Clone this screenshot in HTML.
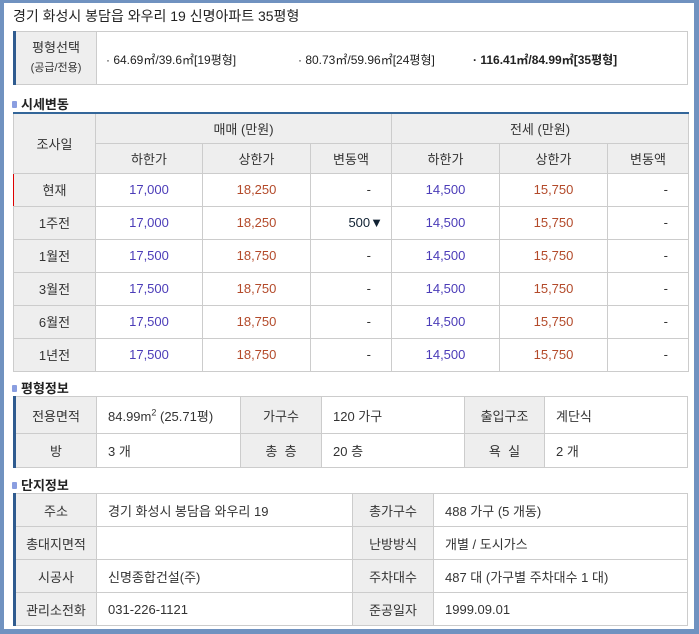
<!DOCTYPE html>
<html><head><meta charset="utf-8"><style>
*{margin:0;padding:0;box-sizing:border-box}
body{width:699px;height:634px;overflow:hidden;background:#fff;font-family:"Liberation Sans","Noto Sans CJK KR","NanumGothic",sans-serif;font-size:13px;color:#333;position:relative}
.frame{position:absolute;left:0;top:0;width:699px;height:634px;border-left:4px solid #7092c0;border-top:3px solid #7092c0;border-right:5px solid #7092c0;border-bottom:5px solid #7092c0}
.title{position:absolute;left:13px;top:6px;font-size:14px;color:#222}
table{position:absolute;border-collapse:collapse;table-layout:fixed}
td{border:1px solid #ccc;text-align:center;vertical-align:middle;padding:0;white-space:nowrap}
.h{background:#eee;color:#333}
.l{text-align:left;padding-left:11px;color:#333}
.sec{position:absolute;left:12px;font-size:13px;font-weight:bold;color:#222}
.sec i{display:inline-block;width:5px;height:7px;background:#8a9ee0;border-radius:1px;margin-right:4px;vertical-align:1px}
.p{color:#4b3cb8}.o{color:#b34a2a}
.r{text-align:right;padding-right:20px}
.s{position:absolute;top:51px;font-size:12px;color:#222}
</style></head><body>
<div class="frame"></div>
<div class="title">경기 화성시 봉담읍 와우리 19 신명아파트 35평형</div>

<table style="left:13px;top:31px;width:675px;border-left:3px solid #2f5b8f">
<colgroup><col style="width:82px"><col></colgroup>
<tr style="height:53px"><td class="h" style="line-height:19px">평형선택<br><span style="font-size:11px">(공급/전용)</span></td>
<td></td></tr>
</table>
<span class="s" style="left:106px">· 64.69㎡/39.6㎡[19평형]</span>
<span class="s" style="left:298px">· 80.73㎡/59.96㎡[24평형]</span>
<span class="s" style="left:473px;font-weight:bold">· 116.41㎡/84.99㎡[35평형]</span>

<div class="sec" style="top:94px"><i></i>시세변동</div>
<table style="left:13px;top:112px;width:675px;border-top:2px solid #336699">
<colgroup><col style="width:82px"><col style="width:107px"><col style="width:108px"><col style="width:81px"><col style="width:108px"><col style="width:108px"><col style="width:81px"></colgroup>
<tr style="height:30px"><td class="h" rowspan="2">조사일</td><td class="h" colspan="3">매매 (만원)</td><td class="h" colspan="3">전세 (만원)</td></tr>
<tr style="height:30px"><td class="h">하한가</td><td class="h">상한가</td><td class="h">변동액</td><td class="h">하한가</td><td class="h">상한가</td><td class="h">변동액</td></tr>
<tr style="height:33px"><td class="h" style="border-left:1px solid #d00">현재</td><td class="p">17,000</td><td class="o">18,250</td><td class="r">-</td><td class="p">14,500</td><td class="o">15,750</td><td class="r">-</td></tr>
<tr style="height:33px"><td class="h">1주전</td><td class="p">17,000</td><td class="o">18,250</td><td class="r" style="padding-right:8px;color:#123">500▼</td><td class="p">14,500</td><td class="o">15,750</td><td class="r">-</td></tr>
<tr style="height:33px"><td class="h">1월전</td><td class="p">17,500</td><td class="o">18,750</td><td class="r">-</td><td class="p">14,500</td><td class="o">15,750</td><td class="r">-</td></tr>
<tr style="height:33px"><td class="h">3월전</td><td class="p">17,500</td><td class="o">18,750</td><td class="r">-</td><td class="p">14,500</td><td class="o">15,750</td><td class="r">-</td></tr>
<tr style="height:33px"><td class="h">6월전</td><td class="p">17,500</td><td class="o">18,750</td><td class="r">-</td><td class="p">14,500</td><td class="o">15,750</td><td class="r">-</td></tr>
<tr style="height:33px"><td class="h">1년전</td><td class="p">17,500</td><td class="o">18,750</td><td class="r">-</td><td class="p">14,500</td><td class="o">15,750</td><td class="r">-</td></tr>
</table>

<div class="sec" style="top:378px"><i></i>평형정보</div>
<table style="left:13px;top:396px;width:675px;border-left:3px solid #2f5b8f">
<colgroup><col style="width:82px"><col style="width:144px"><col style="width:81px"><col style="width:143px"><col style="width:80px"><col></colgroup>
<tr style="height:37px"><td class="h">전용면적</td><td class="l">84.99m<sup style="font-size:9px">2</sup> (25.71평)</td><td class="h">가구수</td><td class="l">120 가구</td><td class="h">출입구조</td><td class="l">계단식</td></tr>
<tr style="height:34px"><td class="h">방</td><td class="l">3 개</td><td class="h">총 &nbsp;층</td><td class="l">20 층</td><td class="h">욕 &nbsp;실</td><td class="l">2 개</td></tr>
</table>

<div class="sec" style="top:475px"><i></i>단지정보</div>
<table style="left:13px;top:493px;width:675px;border-left:3px solid #2f5b8f">
<colgroup><col style="width:82px"><col style="width:256px"><col style="width:81px"><col></colgroup>
<tr style="height:33px"><td class="h">주소</td><td class="l">경기 화성시 봉담읍 와우리 19</td><td class="h">총가구수</td><td class="l">488 가구 (5 개동)</td></tr>
<tr style="height:33px"><td class="h">총대지면적</td><td class="l"></td><td class="h">난방방식</td><td class="l">개별 / 도시가스</td></tr>
<tr style="height:33px"><td class="h">시공사</td><td class="l">신명종합건설(주)</td><td class="h">주차대수</td><td class="l">487 대 (가구별 주차대수 1 대)</td></tr>
<tr style="height:33px"><td class="h">관리소전화</td><td class="l">031-226-1121</td><td class="h">준공일자</td><td class="l">1999.09.01</td></tr>
</table>
</body></html>
